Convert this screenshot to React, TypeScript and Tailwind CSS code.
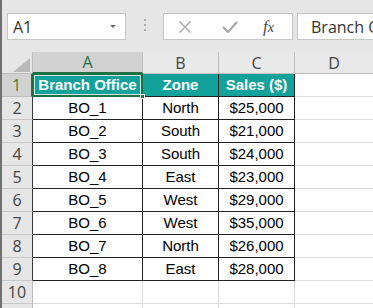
const rows = [
  ["BO_1", "North", "$25,000"],
  ["BO_2", "South", "$21,000"],
  ["BO_3", "South", "$24,000"],
  ["BO_4", "East", "$23,000"],
  ["BO_5", "West", "$29,000"],
  ["BO_6", "West", "$35,000"],
  ["BO_7", "North", "$26,000"],
  ["BO_8", "East", "$28,000"],
];

const ui = { fontFamily: '"Open Sans", "Noto Sans", sans-serif' };
const cell = { fontFamily: '"Liberation Sans", Arial, sans-serif' };

function Toolbar() {
  return (
    <div className="flex h-[52px] items-start pt-[13px] pl-[5px]" style={ui}>
      <div className="flex h-[27px] w-[119px] shrink-0 items-center justify-between border border-[#c6c6c6] bg-white pl-[5px] pr-[9px]">
        <span className="text-[16px] text-[#333]">A1</span>
        <span className="h-0 w-0 border-x-[3px] border-t-[3px] border-x-transparent border-t-[#6b6b6b]" />
      </div>
      <div className="flex w-[37px] shrink-0 flex-col items-center gap-[3px] pt-[6px]">
        <span className="size-[2px] rounded-full bg-[#9a9a9a]" />
        <span className="size-[2px] rounded-full bg-[#9a9a9a]" />
        <span className="size-[2px] rounded-full bg-[#9a9a9a]" />
      </div>
      <div className="flex h-[27px] w-[130px] shrink-0 items-center border border-[#c6c6c6] bg-white">
        <svg className="ml-[14px]" width="14" height="14" viewBox="0 0 14 14">
          <path d="M1.5 1.5 L12.5 12.5 M12.5 1.5 L1.5 12.5" stroke="#a6a6a6" strokeWidth="1.4" fill="none" />
        </svg>
        <svg className="ml-[30px]" width="16" height="14" viewBox="0 0 16 14">
          <path d="M1 7 L6 12 L15 2" stroke="#a6a6a6" strokeWidth="2" fill="none" />
        </svg>
        <span
          className="ml-[25px] text-[17px] italic leading-none text-[#4a4a4a]"
          style={{ fontFamily: '"Liberation Serif", "DejaVu Serif", serif' }}
        >
          f<span className="text-[14px]">x</span>
        </span>
      </div>
      <div className="ml-[4px] flex h-[27px] min-w-0 flex-1 items-center overflow-hidden border border-r-0 border-[#c6c6c6] bg-white pl-[13px]">
        <span className="whitespace-nowrap text-[16px] text-[#333]">Branch Office</span>
      </div>
    </div>
  );
}

function ColHeader() {
  return (
    <div className="flex h-[22px] text-[16px] text-[#444]" style={ui}>
      <div className="relative w-[31px] shrink-0 border-r border-b border-[#bdbdbd] bg-[#e6e6e6]">
        <svg className="absolute right-[2px] bottom-[1px]" width="17" height="14" viewBox="0 0 17 14">
          <path d="M17 0 L17 14 L0 14 Z" fill="#b9b9b9" />
        </svg>
      </div>
      <div className="flex w-[110px] shrink-0 items-center justify-center border-r border-b-2 border-r-[#bdbdbd] border-b-[#217346] bg-[#d2d2d2] leading-none text-[#217346]">
        A
      </div>
      <div className="flex w-[76px] shrink-0 items-center justify-center border-r border-b border-[#bdbdbd] bg-[#e9e9e9] leading-none">
        B
      </div>
      <div className="flex w-[76px] shrink-0 items-center justify-center border-r border-b border-[#bdbdbd] bg-[#e9e9e9] leading-none">
        C
      </div>
      <div className="flex flex-1 items-center justify-center border-b border-[#bdbdbd] bg-[#e9e9e9] leading-none">
        D
      </div>
    </div>
  );
}

function RowNum({ n, dark, selected }: { n?: number; dark?: boolean; selected?: boolean }) {
  return (
    <div
      className={
        selected
          ? "flex w-[31px] shrink-0 items-center justify-center border-r-2 border-b border-r-[#217346] border-b-[#bdbdbd] bg-[#d2d2d2] text-[16px] text-[#4f7a32]"
          : dark
            ? "flex w-[31px] shrink-0 items-center justify-center border-r border-b border-r-[#3a3a3a] border-b-[#c8c8c8] bg-[#e6e6e6] text-[16px] text-[#444]"
            : "flex w-[31px] shrink-0 items-center justify-center border-r border-b border-r-[#bdbdbd] border-b-[#c8c8c8] bg-[#e6e6e6] text-[16px] text-[#444]"
      }
      style={ui}
    >
      {n}
    </div>
  );
}

function Sheet() {
  return (
    <div className="flex flex-col">
      <ColHeader />
      <div className="flex h-[23px]">
        <RowNum n={1} selected />
        <div className="relative flex w-[110px] shrink-0 items-center justify-center border-r border-b border-[#222] bg-[#13a19b] text-[15px] font-bold text-white" style={cell}>
          Branch Office
          <span className="pointer-events-none absolute -top-[1px] -left-[1px] -right-[1px] -bottom-[1px] border-2 border-[#1e7145] shadow-[inset_0_0_0_1px_#cfe8e0]" />
          <span className="absolute -right-[3px] -bottom-[3px] size-[5px] border border-white bg-[#1e7145]" />
        </div>
        <div className="flex w-[76px] shrink-0 items-center justify-center border-r border-b border-[#222] bg-[#13a19b] text-[15px] font-bold text-white" style={cell}>
          Zone
        </div>
        <div className="flex w-[76px] shrink-0 items-center justify-center border-r border-b border-[#222] bg-[#13a19b] text-[15px] font-bold text-white" style={cell}>
          Sales ($)
        </div>
        <div className="flex-1 border-b border-[#dadada]" />
      </div>
      {rows.map((r, i) => (
        <div key={r[0]} className="flex h-[23px] text-[15px] text-black" style={cell}>
          <RowNum n={i + 2} dark />
          <div className="flex w-[110px] shrink-0 items-center justify-center border-r border-b border-[#222]">{r[0]}</div>
          <div className="flex w-[76px] shrink-0 items-center justify-center border-r border-b border-[#222]">{r[1]}</div>
          <div className="flex w-[76px] shrink-0 items-center justify-center border-r border-b border-[#222]">{r[2]}</div>
          <div className="flex-1 border-b border-[#dadada]" />
        </div>
      ))}
      <div className="flex h-[23px]">
        <RowNum n={10} />
        <div className="w-[110px] shrink-0 border-r border-b border-[#dadada]" />
        <div className="w-[76px] shrink-0 border-r border-b border-[#dadada]" />
        <div className="w-[76px] shrink-0 border-r border-b border-[#dadada]" />
        <div className="flex-1 border-b border-[#dadada]" />
      </div>
      <div className="flex h-[23px]">
        <RowNum />
        <div className="w-[110px] shrink-0 border-r border-[#dadada]" />
        <div className="w-[76px] shrink-0 border-r border-[#dadada]" />
        <div className="w-[76px] shrink-0 border-r border-[#dadada]" />
        <div className="flex-1" />
      </div>
    </div>
  );
}

export default function App() {
  return (
    <div className="h-[308px] w-[373px] overflow-hidden border-l-2 border-[#707070] bg-[#e6e6e6]">
      <Toolbar />
      <div className="bg-white">
        <Sheet />
      </div>
    </div>
  );
}
